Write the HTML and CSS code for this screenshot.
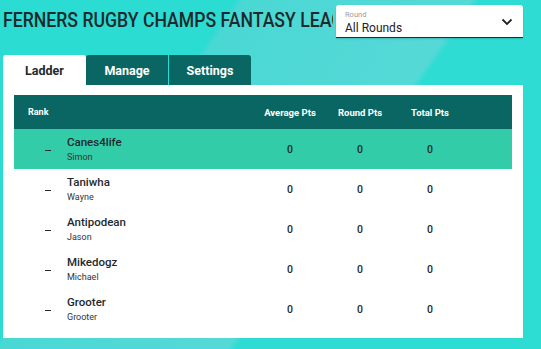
FILE: index.html
```html
<!DOCTYPE html>
<html>
<head>
<meta charset="utf-8">
<link rel="stylesheet" href="styles.css">
</head>
<body>
<div class="page">
  <div class="topbar">
    <div class="title-wrap"><h1 class="title">FERNERS RUGBY CHAMPS FANTASY LEAGUE</h1></div>
    <div class="select">
      <div class="select-label">Round</div>
      <div class="select-value">All Rounds</div>
      <svg class="chevron" width="12" height="8" viewBox="0 0 12 8"><path d="M1.5 1.5 L6 6 L10.5 1.5" fill="none" stroke="#222" stroke-width="1.8"/></svg>
    </div>
  </div>
  <div class="tabs">
    <div class="tab active">Ladder</div>
    <div class="tab">Manage</div>
    <div class="tab">Settings</div>
  </div>
  <div class="panel">
    <div class="table">
      <div class="row head">
        <div class="c-rank">Rank</div>
        <div class="c-name"></div>
        <div class="c-num">Average Pts</div>
        <div class="c-num">Round Pts</div>
        <div class="c-num">Total Pts</div>
        <div></div>
      </div>
      <div class="row hl">
        <div class="c-dash"><span class="dash"></span></div>
        <div class="c-name"><div class="team">Canes4life</div><div class="owner">Simon</div></div>
        <div class="c-num">0</div><div class="c-num">0</div><div class="c-num">0</div><div></div>
      </div>
      <div class="row">
        <div class="c-dash"><span class="dash"></span></div>
        <div class="c-name"><div class="team">Taniwha</div><div class="owner">Wayne</div></div>
        <div class="c-num">0</div><div class="c-num">0</div><div class="c-num">0</div><div></div>
      </div>
      <div class="row">
        <div class="c-dash"><span class="dash"></span></div>
        <div class="c-name"><div class="team">Antipodean</div><div class="owner">Jason</div></div>
        <div class="c-num">0</div><div class="c-num">0</div><div class="c-num">0</div><div></div>
      </div>
      <div class="row">
        <div class="c-dash"><span class="dash"></span></div>
        <div class="c-name"><div class="team">Mikedogz</div><div class="owner">Michael</div></div>
        <div class="c-num">0</div><div class="c-num">0</div><div class="c-num">0</div><div></div>
      </div>
      <div class="row">
        <div class="c-dash"><span class="dash"></span></div>
        <div class="c-name"><div class="team">Grooter</div><div class="owner">Grooter</div></div>
        <div class="c-num">0</div><div class="c-num">0</div><div class="c-num">0</div><div></div>
      </div>
    </div>
  </div>
</div>
</body>
</html>
```
FILE: styles.css
```css
html, body {
  margin: 0;
  padding: 0;
  height: 100%;
}
body {
  font-family: Roboto, "Liberation Sans", sans-serif;
  background: linear-gradient(125deg, #2bdcd2 0%, #2bdcd2 30%, #4ad8d4 31%, #55d9d7 60%, #2fdcd3 61%, #2ddcd3 100%);
  overflow: hidden;
  color: #1d2a2c;
}
.page {
  padding: 0 18px 0 3px;
}
.topbar {
  height: 55px;
  position: relative;
}
.title-wrap {
  width: 330px;
  overflow: hidden;
}
.title {
  margin: 0;
  padding-top: 8px;
  font-size: 21px;
  line-height: 25px;
  font-weight: 500;
  white-space: nowrap;
  color: #1e2a2d;
  transform: scaleX(0.84);
  transform-origin: left top;
}
.select {
  position: absolute;
  left: 333px;
  top: 5px;
  width: 187px;
  height: 32px;
  background: #fff;
  border-radius: 3px 3px 0 0;
  border-bottom: 1px solid #2a2a2a;
  box-shadow: 0 1px 2px rgba(0,0,0,0.15);
  z-index: 2;
}
.select-label {
  position: absolute;
  left: 9px;
  top: 5px;
  font-size: 7.5px;
  line-height: 9px;
  color: #9a9a9a;
}
.select-value {
  position: absolute;
  left: 9px;
  top: 16px;
  font-size: 12px;
  line-height: 14px;
  color: #222;
}
.chevron {
  position: absolute;
  right: 10px;
  top: 13px;
}
.tabs {
  display: flex;
  height: 30px;
}
.tab {
  width: 82px;
  background: #0a6662;
  color: #fff;
  font-size: 12.5px;
  font-weight: 700;
  display: flex;
  align-items: center;
  justify-content: center;
}
.tab:nth-child(2) {
  border-radius: 3px 0 0 0;
}
.tab:nth-child(3) {
  margin-left: 1px;
  border-radius: 0 3px 0 0;
}
.tab.active {
  width: 83px;
  background: #fff;
  color: #1e2a2d;
  border-radius: 3px 3px 0 0;
}
.panel {
  background: #fff;
  width: 520px;
  padding: 10px 11px 9px 11px;
  box-sizing: border-box;
}
.row {
  display: grid;
  grid-template-columns: 53px 188px 70px 70px 70px 1fr;
  height: 40px;
  align-items: center;
}
.row.head {
  height: 34px;
  background: #0a6662;
  color: #fff;
  font-size: 9px;
  font-weight: 700;
}
.row.hl {
  background: #33cca9;
}
.c-rank {
  padding-left: 14px;
}
.c-num {
  text-align: center;
  font-size: 10.5px;
  font-weight: 500;
}
.head .c-num {
  font-size: 9.5px;
  font-weight: 700;
}
.c-dash {
  padding-left: 31px;
  display: flex;
  align-items: center;
  padding-top: 2px;
}
.dash {
  display: block;
  width: 6px;
  height: 1px;
  background: #1e2a2d;
}
.team {
  font-size: 11.5px;
  font-weight: 500;
  color: #1e2a2d;
  line-height: 14px;
}
.owner {
  font-size: 9px;
  color: #333;
  margin-top: 3px;
  line-height: 11px;
}
```
